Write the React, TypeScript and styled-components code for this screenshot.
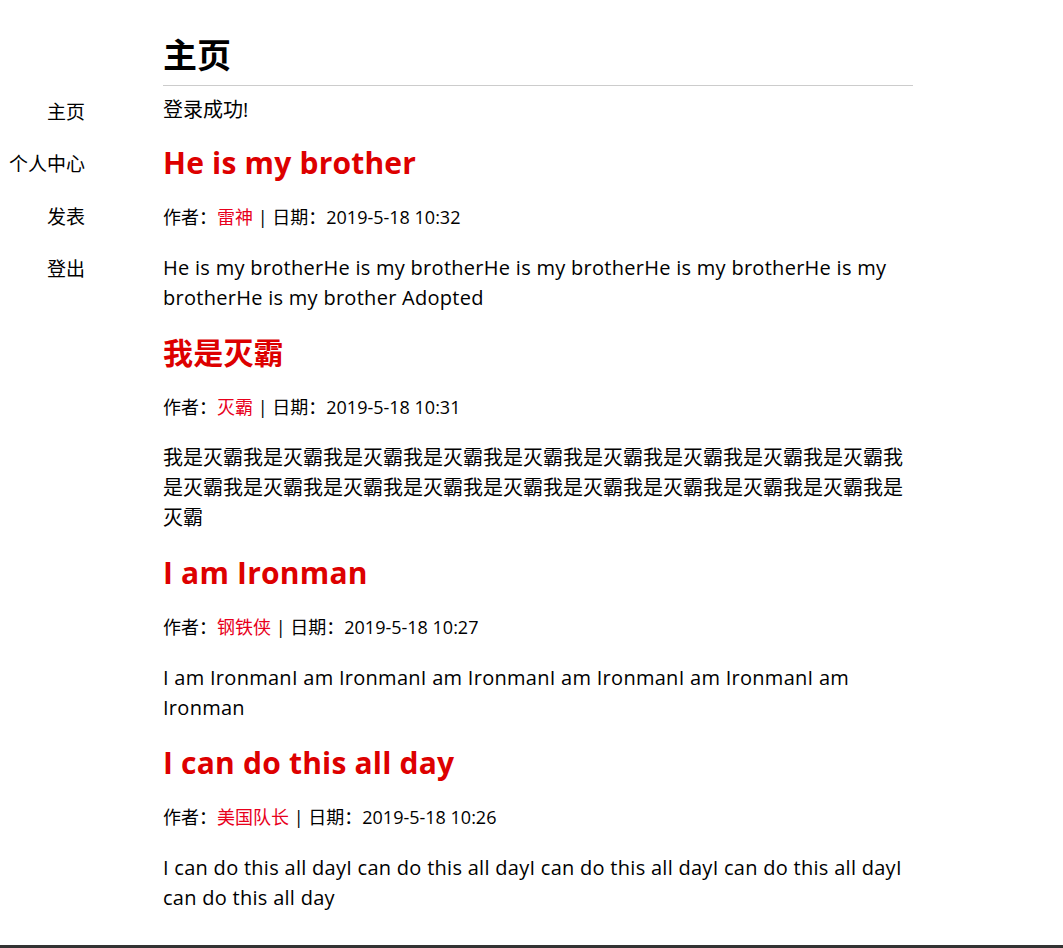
import React from "react";
import styled, { createGlobalStyle } from "styled-components";

const GlobalStyle = createGlobalStyle`
  html, body {
    margin: 0;
    padding: 0;
    background: #fff;
    color: #000;
    font-family: "Open Sans", "Noto Sans CJK SC", sans-serif;
  }
`;

const Page = styled.div`
  display: flex;
  align-items: flex-start;
`;

const Nav = styled.nav`
  width: 85px;
  padding-top: 85px;
  display: flex;
  flex-direction: column;
  align-items: flex-end;
  flex-shrink: 0;
`;

const NavLink = styled.a`
  display: block;
  font-size: 19px;
  line-height: 52.3px;
  color: #000;
  text-decoration: none;
  white-space: nowrap;
  font-family: "Noto Sans CJK SC", sans-serif;
`;

const Main = styled.main`
  width: 750px;
  margin-left: 78px;
  padding-top: 34px;
`;

const PageTitle = styled.h1`
  margin: 0;
  font-size: 34px;
  line-height: 40px;
  font-weight: 700;
  padding-bottom: 11px;
  border-bottom: 1px solid #cccccc;
  font-family: "Noto Sans CJK SC", sans-serif;
`;

const Notice = styled.p`
  margin: 9px 0 0;
  font-size: 20px;
  line-height: 30px;
`;

const ArticleList = styled.div`
  display: flex;
  flex-direction: column;
  gap: 22px;
  margin-top: 20px;
`;

const Article = styled.article`
  display: flex;
  flex-direction: column;
  gap: 23px;
`;

const Title = styled.h2`
  margin: 0;
  font-size: 30px;
  line-height: 36px;
  font-weight: 700;
  color: #dd0000;
  letter-spacing: 0.2px;
`;

const Meta = styled.div`
  font-size: 18px;
  line-height: 26px;
`;

const Author = styled.span`
  color: #e8001c;
`;

const Body = styled.p<{ $latin?: boolean }>`
  margin: 0;
  font-size: 20px;
  line-height: 30px;
  letter-spacing: ${(p) => (p.$latin ? "0.28px" : "0")};
  word-break: break-word;
`;

const Footer = styled.footer`
  margin-top: 32px;
  border-top: 3px solid #333;
  height: 40px;
`;

const posts = [
  {
    title: "He is my brother",
    author: "雷神",
    date: "2019-5-18 10:32",
    body: "He is my brotherHe is my brotherHe is my brotherHe is my brotherHe is my brotherHe is my brother Adopted",
    latin: true,
  },
  {
    title: "我是灭霸",
    author: "灭霸",
    date: "2019-5-18 10:31",
    body: "我是灭霸".repeat(19),
    latin: false,
  },
  {
    title: "I am Ironman",
    author: "钢铁侠",
    date: "2019-5-18 10:27",
    body: "I am IronmanI am IronmanI am IronmanI am IronmanI am IronmanI am Ironman",
    latin: true,
  },
  {
    title: "I can do this all day",
    author: "美国队长",
    date: "2019-5-18 10:26",
    body: "I can do this all dayI can do this all dayI can do this all dayI can do this all dayI can do this all day",
    latin: true,
  },
];

export default function App() {
  return (
    <>
      <GlobalStyle />
      <Page>
        <Nav>
          <NavLink href="#">主页</NavLink>
          <NavLink href="#">个人中心</NavLink>
          <NavLink href="#">发表</NavLink>
          <NavLink href="#">登出</NavLink>
        </Nav>
        <Main>
          <PageTitle>主页</PageTitle>
          <Notice>登录成功!</Notice>
          <ArticleList>
            {posts.map((p) => (
              <Article key={p.title}>
                <Title>{p.title}</Title>
                <Meta>
                  作者：<Author>{p.author}</Author> | 日期：{p.date}
                </Meta>
                <Body $latin={p.latin}>{p.body}</Body>
              </Article>
            ))}
          </ArticleList>
        </Main>
      </Page>
      <Footer />
    </>
  );
}
